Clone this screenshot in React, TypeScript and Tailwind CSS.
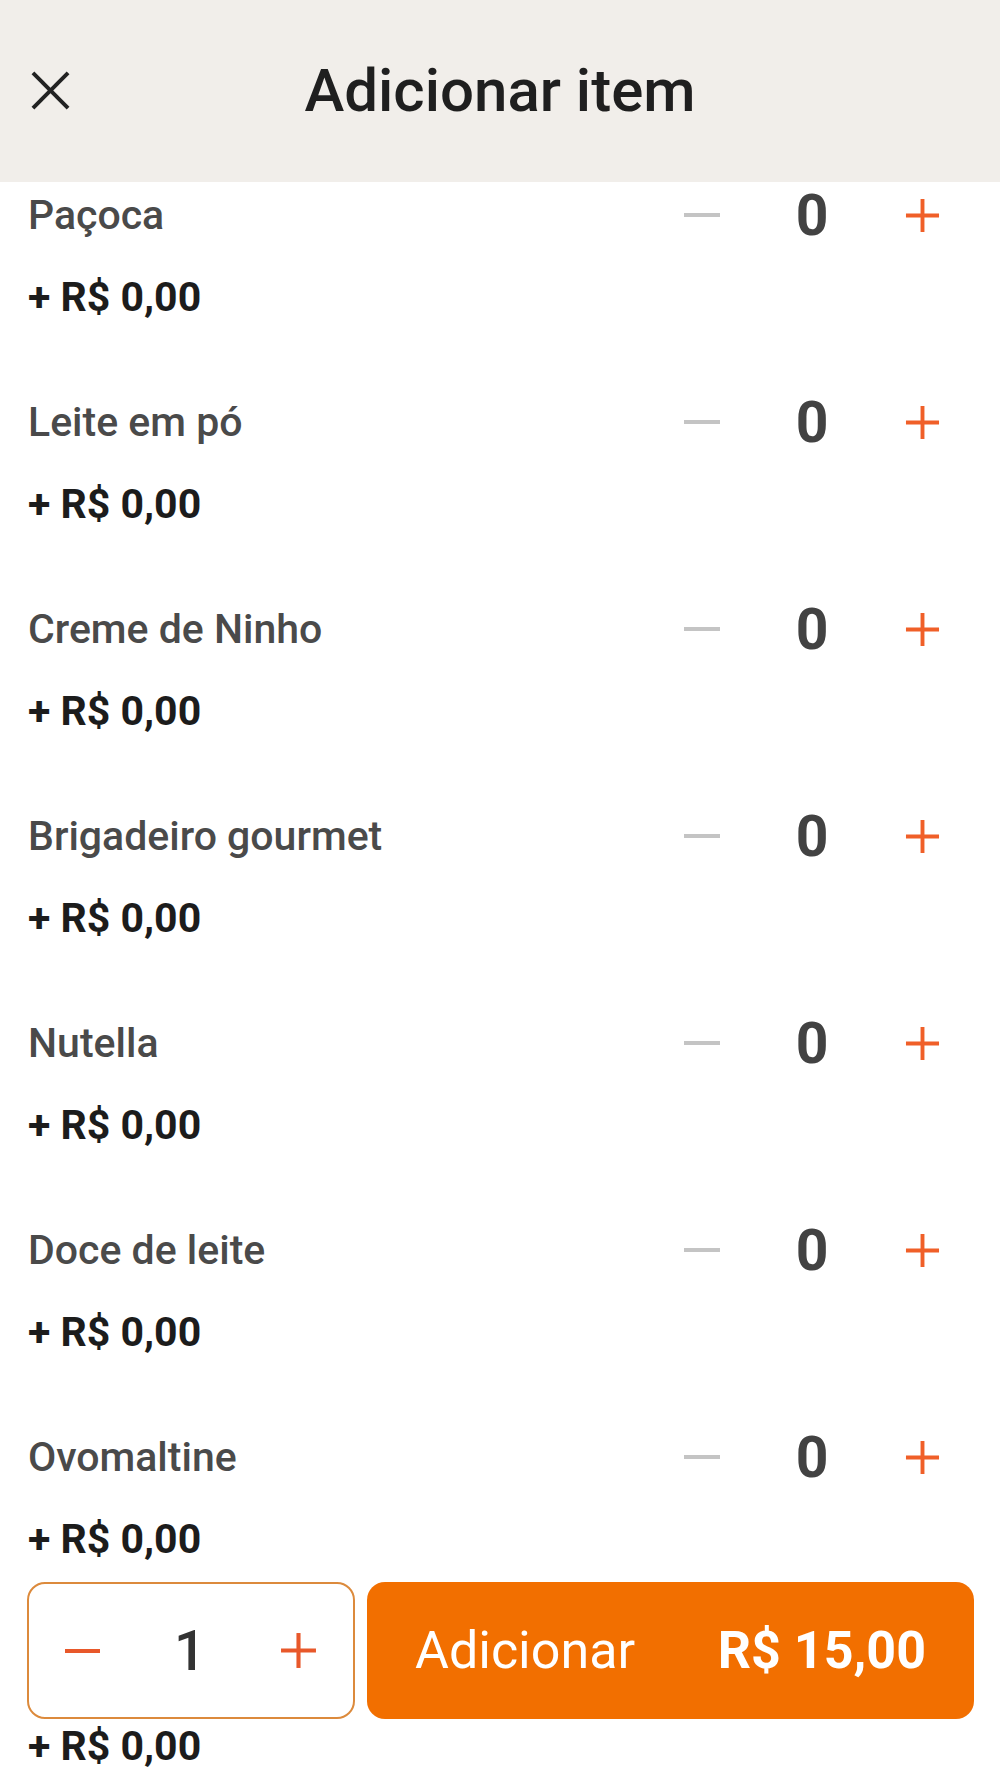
import React from "react";

const items = [
  "Paçoca",
  "Leite em pó",
  "Creme de Ninho",
  "Brigadeiro gourmet",
  "Nutella",
  "Doce de leite",
  "Ovomaltine",
  "Granulado",
];

function PlusIcon({ className }: { className?: string }) {
  return (
    <svg viewBox="0 0 36 36" className={className} fill="none" stroke="currentColor" strokeWidth="4">
      <line x1="18" y1="1" x2="18" y2="35" />
      <line x1="1" y1="18" x2="35" y2="18" />
    </svg>
  );
}

export default function App() {
  return (
    <div className="relative w-[1000px] h-[1778px] overflow-hidden bg-white font-['Roboto',sans-serif]">
      {/* topo */}
      <div className="relative flex h-[182px] items-center justify-center bg-[#f1eeea]">
        <button className="absolute left-[31px] top-[71px] h-[39px] w-[39px] text-[#222]">
          <svg viewBox="0 0 40 40" className="h-full w-full" fill="none" stroke="currentColor" strokeWidth="4">
            <line x1="2" y1="2" x2="38" y2="38" />
            <line x1="38" y1="2" x2="2" y2="38" />
          </svg>
        </button>
        <h1 className="text-[60px] font-medium leading-none text-[#1f1f1f]">Adicionar item</h1>
      </div>

      {/* lista de adicionais */}
      <div className="flex flex-col">
        {items.map((name) => (
          <div key={name} className="flex h-[207px] flex-col pl-[28px] pr-[23px]">
            <div className="flex h-[66px] items-center">
              <span className="flex-1 text-[41px] font-medium leading-none text-[#4a4a4a]">{name}</span>
              <div className="flex items-center">
                <div className="flex w-[110px] justify-center">
                  <div className="h-[4px] w-[36px] bg-[#c4c4c4]" />
                </div>
                <div className="flex w-[110px] justify-center text-[57px] font-bold leading-none text-[#424242]">0</div>
                <div className="flex w-[110px] justify-center">
                  <PlusIcon className="h-[35px] w-[35px] text-[#f05f28]" />
                </div>
              </div>
            </div>
            <div className="mt-[16px] flex h-[66px] items-center text-[41px] font-bold leading-none text-[#1c1c1c]">
              + R$ 0,00
            </div>
          </div>
        ))}
      </div>

      {/* barra inferior */}
      <div className="absolute left-[27px] right-[26px] top-[1582px] flex h-[137px] gap-[12px]">
        <div className="flex w-[328px] items-center justify-between rounded-[18px] border-2 border-[#dc8a3c] bg-white px-[36px]">
          <div className="h-[4px] w-[35px] bg-[#e8582a]" />
          <span className="text-[56px] font-medium leading-none text-[#333]">1</span>
          <PlusIcon className="h-[37px] w-[37px] text-[#e8582a]" />
        </div>
        <button className="flex flex-1 items-center justify-between rounded-[18px] bg-[#f26f00] px-[48px] text-white">
          <span className="text-[52px] leading-none">Adicionar</span>
          <span className="text-[52px] font-bold leading-none">R$ 15,00</span>
        </button>
      </div>
    </div>
  );
}
